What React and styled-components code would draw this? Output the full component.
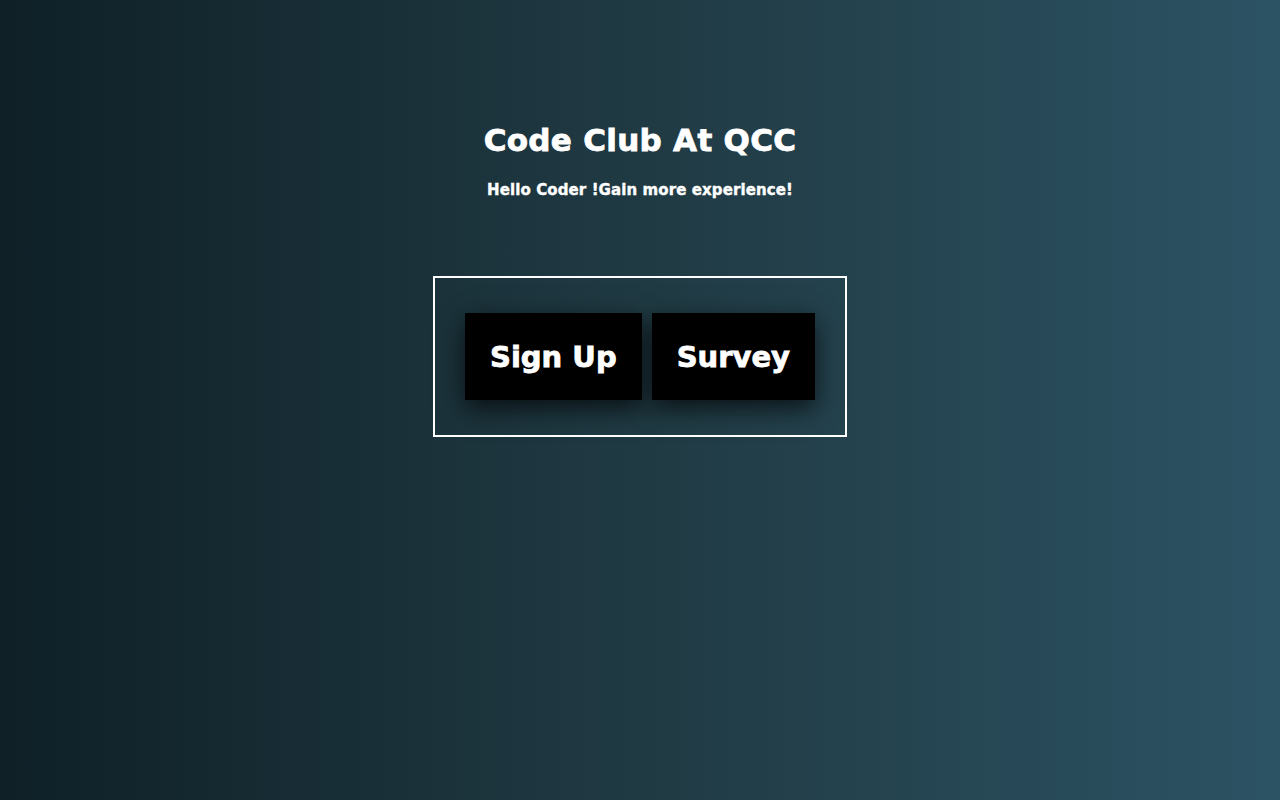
import React from "react";
import styled, { createGlobalStyle } from "styled-components";

const GlobalStyle = createGlobalStyle`
  html, body {
    margin: 0;
    padding: 0;
  }
  body {
    font-family: "DejaVu Sans", "Liberation Sans", sans-serif;
    color: #fff;
  }
`;

const StyledPage = styled.div`
  min-height: 100vh;
  background: linear-gradient(to right, #0f2027, #203a43, #2c5364);
  display: flex;
  flex-direction: column;
  align-items: center;
  padding-top: 120px;
  box-sizing: border-box;
`;

const Title = styled.h1`
  margin: 0;
  font-size: 31px;
  font-weight: 700;
  line-height: 40px;
  letter-spacing: 0.3px;
  -webkit-text-stroke: 0.8px #fff;
`;

const Subtitle = styled.p`
  margin: 20px 0 0;
  font-size: 15px;
  font-weight: 700;
  line-height: 20px;
  letter-spacing: 0.1px;
  -webkit-text-stroke: 0.4px #fff;
`;

const ButtonBox = styled.div`
  margin-top: 76px;
  display: flex;
  gap: 10px;
  padding: 35px 30px;
  border: 2px solid #fff;
`;

const BigButton = styled.button`
  height: 87px;
  padding: 0 25px;
  border: none;
  background: #000;
  color: #fff;
  font-family: inherit;
  font-size: 29px;
  font-weight: 700;
  -webkit-text-stroke: 0.8px #fff;
  box-shadow: 0 8px 24px rgba(0, 0, 0, 0.7);
  cursor: pointer;
`;

export default function App() {
  return (
    <>
      <GlobalStyle />
      <StyledPage>
        <Title>Code Club At QCC</Title>
        <Subtitle>Hello Coder !Gain more experience!</Subtitle>
        <ButtonBox>
          <BigButton>Sign Up</BigButton>
          <BigButton>Survey</BigButton>
        </ButtonBox>
      </StyledPage>
    </>
  );
}
